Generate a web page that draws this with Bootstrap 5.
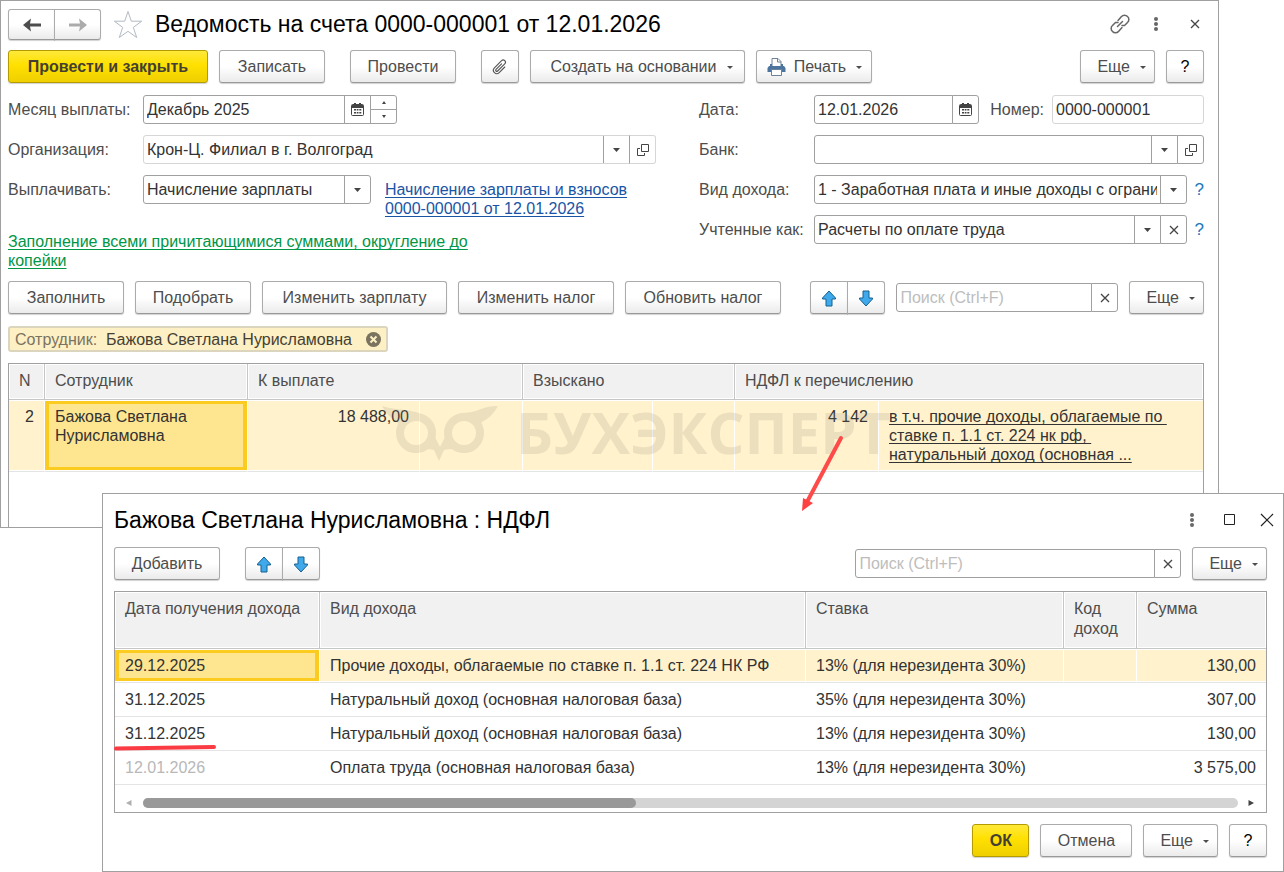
<!DOCTYPE html>
<html lang="ru">
<head>
<meta charset="utf-8">
<meta name="viewport" content="width=device-width, initial-scale=1">
<title>Ведомость на счета</title>
<link href="https://cdn.jsdelivr.net/npm/bootstrap@5.3.0/dist/css/bootstrap.min.css" rel="stylesheet">
<style>
:root { --line: #a0a0a0; --soft: #d6d6d6; --ink: #333; --label: #4d4d4d; }
body { font-family: "Liberation Sans", Arial, sans-serif; font-size: 16px; line-height: 19px; color: var(--ink); background: #fff; }
.win { border: 1px solid var(--line); background: #fff; }
.win-doc { margin-right: 65px; padding: 7px 14px 0 7px; }
.win-dlg { margin: -35px 0 0 102px; padding: 10px 16px 14px 11px; position: relative; }
.win-title { font-size: 23px; line-height: 32px; color: #000; font-weight: 400; }
.gap-cmd { gap: 11px; }
.sep-l { margin-left: 14px; }
.bar-doc { margin-top: 10px; }
.bar-cmd { margin-top: 11px; }
.bar-dlg { margin: 11px 0; }
.form-top { padding-top: 12px; }

.btn { font-size: 16px; line-height: 19px; border-radius: 3px; }
.btn-cmd { --bs-btn-color: #4d4d4d; height: 33px; padding: 0 16px; color: #4d4d4d; border: 1px solid #ababab; border-bottom-color: #999;
  background: linear-gradient(#fff 50%, #ebebeb); box-shadow: 0 1px 1px rgba(0,0,0,.18); white-space: nowrap; }
.btn-main { color: #453f33; font-weight: 700; border-color: #b39b00; background: linear-gradient(#ffe93a, #ffe000 45%, #efcf00); }
.btn-sq { width: 38px; padding: 0; color: #000; }
.btn-nav { width: 47px; height: 31px; padding: 0; }
.btn-print { padding-left: 9px; }
.btn-menu::after { content: ""; display: inline-block; border: 3px solid transparent; border-top-color: #4d4d4d; border-bottom: 0; margin: 0 -8px 3px 10px; }
.btn-bare { padding: 0; border: 0; line-height: 0; }
.b57 { min-width: 57px; } .b92 { min-width: 92px; } .b106 { min-width: 106px; } .b116 { min-width: 116px; } .b156 { min-width: 156px; }
.b185 { min-width: 185px; } .b200 { min-width: 200px; } .b215 { min-width: 215px; }

.lab { color: var(--label); white-space: nowrap; width: 135px; }
.lab-r { width: 115px; }
.top5 { padding-top: 5px; }
.top3 { padding-top: 3px; }
.form-control, .form-select { height: 29px; padding: 0 3px; font-size: 16px; line-height: 19px; color: var(--ink); border: 1px solid var(--line); border-radius: 3px; background-color: #fff; min-height: 0; }
.form-control::placeholder { color: #bdbdbd; opacity: 1; }
.form-select { padding-right: 29px; text-overflow: clip;
  background-image: url("data:image/svg+xml,%3Csvg xmlns='http://www.w3.org/2000/svg' viewBox='0 0 7 4'%3E%3Cpath d='M0 0h7L3.500 4z' fill='%23444'/%3E%3C/svg%3E"), linear-gradient(#a0a0a0, #a0a0a0);
  background-size: 7px 4px, 1px 100%; background-position: right 9px center, right 25px top; background-repeat: no-repeat; }
.soft { border-color: var(--soft); }
.input-group { min-width: 0; }
.btn-cell { width: 27px; height: 29px; padding: 0; border: 1px solid var(--line); background: #fff; line-height: 0; flex: none; }
.btn-cell.soft { border-color: var(--soft); border-left-color: var(--line); }
.spin { width: 27px; height: 29px; margin-left: -1px; border: 1px solid var(--line); border-radius: 0 3px 3px 0; }
.spin button { flex: 1; border: 0; padding: 0; background: none; line-height: 0; }
.spin button + button { border-top: 1px solid var(--line); }
.f-month { width: 254px; } .f-pay { width: 228px; } .f-date { width: 165px; } .f-num { width: 152px; } .f-find { width: 222px; } .f-find2 { width: 326px; }
.col-a { width: 648px; } .col-b { width: 505px; }
.rows { gap: 11px; }
.hint { flex: none; width: 17px; color: #1878c0; font-size: 17px; text-align: right; text-decoration: none; }
.lnk { text-decoration: underline; text-underline-offset: 2px; text-decoration-skip-ink: none; }
.lnk-blue { color: #1a55a5; } .lnk-green { color: #009646; } .lnk-dark { color: var(--ink); }
.chip { height: 26px; min-width: 380px; margin: 12px 0 11px; padding: 0 5px; border: 2px solid #dcd5bd; border-radius: 3px; background: #fdf0c4; color: #453f33; }
.chip span { color: #7a735f; }

.grid-box { border: 1px solid var(--line); }
.grid-doc { border-bottom: 0; padding-bottom: 55px; position: relative; }
.grid { width: 100%; table-layout: fixed; border-collapse: separate; border-spacing: 0; }
.grid th { font-weight: 400; color: var(--label); vertical-align: top; background: #f1f1f1; padding: 7px 9px 0 10px;
  border-right: 1px solid #c6c6c6; border-bottom: 1px solid #c6c6c6; box-shadow: inset 0 0 0 1px #fff; }
.grid td { vertical-align: top; padding: 7px 10px 0; border-bottom: 1px solid #e4e4e4; white-space: nowrap; }
.grid th:last-child { border-right: 0; }
.grid .cur td { background: #fff2cc; border-right: 1px solid #fff; box-shadow: inset 0 1px #fff, inset 0 -1px #fff; }
.grid .cur td:last-child { border-right: 0; }
.grid .cur .pick { background: #fee590; box-shadow: inset 0 1px #fff, inset 0 -1px #fff, inset 0 0 0 4px #fbcb20; }
.doc th { height: 36px; } .doc td { height: 72px; }
.dlg th { height: 57px; line-height: 20px; } .dlg td { height: 34px; }
.w36 { width: 36px; } .w203 { width: 203px; } .w172 { width: 172px; } .w103 { width: 103px; } .w130 { width: 130px; } .w82 { width: 82px; } .w144 { width: 144px; }
.w205 { width: 205px; } .w486 { width: 486px; } .w258 { width: 258px; } .w73 { width: 73px; }
.dim { color: #b8b8b8; }
.wmark { position: absolute; left: 367px; top: 37px; height: 66px; pointer-events: none; color: #8e8175; opacity: .16; }
.wmark svg { flex: none; }
.wmark b { font: 700 58px/62px "Open Sans", sans-serif; margin-left: 16px; white-space: nowrap; }
.arrow { position: absolute; left: 60px; top: 33px; z-index: 5; }
.stroke { position: absolute; left: -2px; bottom: -1px; }
.scroll { height: 27px; padding: 8px 12px 0 11px; }
.scroll-track { height: 10px; border-radius: 5px; background: #d4d4d4; margin: 0 10px 0 11px; }
.scroll-thumb { height: 10px; border-radius: 5px; background: #999; }
.close-dlg { margin-right: -7px; }
.dots-dlg { margin-right: 6px; }
</style>
</head>
<body>
<svg class="d-none" xmlns="http://www.w3.org/2000/svg">
  <symbol id="i-cal" viewBox="0 0 13 13"><path d="M1 2h11v3H1z" fill="#444"/><path d="M3 0h2v3H3zM8 0h2v3H8z" fill="#444"/><rect x=".5" y="1.500" width="12" height="11" rx="1" fill="none" stroke="#444"/><path d="M3 6h2v1.500H3zM5.700 6h1.800v1.500H5.700zM8.300 6h2v1.500h-2zM3 9h2v1.500H3zM5.700 9h1.800v1.500H5.700zM8.300 9h2v1.500h-2z" fill="#444"/></symbol>
  <symbol id="i-open" viewBox="0 0 12 12"><path d="M4.500.5h7v7h-7zM3 4.500H.5v7h7V9" fill="none" stroke="#444"/></symbol>
  <symbol id="i-x" viewBox="0 0 10 10"><path d="M1 1l8 8M9 1l-8 8" stroke="#444" stroke-width="1.300" fill="none"/></symbol>
  <symbol id="i-dots" viewBox="0 0 4 14"><g fill="#666"><circle cx="2" cy="2" r="2"/><circle cx="2" cy="7" r="2"/><circle cx="2" cy="12" r="2"/></g></symbol>
  <symbol id="i-up" viewBox="0 0 16 17"><path d="M8 1l6.500 7v1H11v7H5V9H1.500V8z" fill="#3fa9ec" stroke="#15608f" stroke-linejoin="round"/></symbol>
  <symbol id="i-down" viewBox="0 0 16 17"><path d="M8 16l6.500-7V8H11V1H5v7H1.500v1z" fill="#3fa9ec" stroke="#15608f" stroke-linejoin="round"/></symbol>
</svg>

<main class="win win-doc">
  <header class="d-flex align-items-center">
    <div class="btn-group">
      <button class="btn btn-cmd btn-nav" type="button" aria-label="Назад"><svg width="18" height="14" viewBox="0 0 18 14"><path d="M0 7l8-6.500L7 5.500h11v3H7l1 5z" fill="#4d4d4d"/></svg></button>
      <button class="btn btn-cmd btn-nav" type="button" aria-label="Вперед"><svg width="18" height="14" viewBox="0 0 18 14"><path d="M18 7l-8-6.500 1 5H0v3h11l-1 5z" fill="#ababab"/></svg></button>
    </div>
    <button class="btn btn-bare ms-2 ps-1 me-2" type="button" aria-label="В избранное"><svg width="30" height="29" viewBox="0 0 30 29"><path d="M15 1.500l3.300 9.700h10.400l-8.400 6.200 3.400 10.100L15 21.300l-8.700 6.200 3.400-10.100-8.400-6.200h10.400z" fill="#fff" stroke="#b3bac1"/></svg></button>
    <h1 class="win-title m-0 ms-1">Ведомость на счета 0000-000001 от 12.01.2026</h1>
    <div class="d-flex align-items-center ms-auto gap-4 me-1">
      <button class="btn btn-bare" type="button" aria-label="Ссылка"><svg width="20" height="20" viewBox="0 0 20 20" fill="none" stroke="#666" stroke-width="1.500" stroke-linecap="round"><path d="M8 6.500l3.500-4a4 4 0 0 1 6 0 4 4 0 0 1 0 6l-3 3H12M12 13.500l-3.500 4a4 4 0 0 1-6 0 4 4 0 0 1 0-6l3-3H8M7.500 12.500l5-5"/></svg></button>
      <button class="btn btn-bare" type="button" aria-label="Меню"><svg width="4" height="14"><use href="#i-dots"/></svg></button>
      <button class="btn btn-bare ms-2" type="button" aria-label="Закрыть"><svg width="10" height="10"><use href="#i-x"/></svg></button>
    </div>
  </header>

  <div class="d-flex gap-cmd bar-doc">
    <button class="btn btn-cmd btn-main b200" type="button">Провести и закрыть</button>
    <button class="btn btn-cmd b106" type="button">Записать</button>
    <button class="btn btn-cmd sep-l b106" type="button">Провести</button>
    <button class="btn btn-cmd btn-sq sep-l" type="button" aria-label="Файлы"><svg width="18" height="18" viewBox="0 0 16 16"><path transform="rotate(45 8 8)" fill="#555" d="M4.500 3a2.500 2.500 0 0 1 5 0v9a1.500 1.500 0 0 1-3 0V5a.5.5 0 0 1 1 0v7a.5.5 0 0 0 1 0V3a1.500 1.500 0 1 0-3 0v9a2.500 2.500 0 0 0 5 0V5a.5.5 0 0 1 1 0v7a3.500 3.500 0 1 1-7 0z"/></svg></button>
    <button class="btn btn-cmd btn-menu b215" type="button">Создать на основании</button>
    <button class="btn btn-cmd btn-menu btn-print b116" type="button"><svg class="me-2" width="19" height="18" viewBox="0 0 19 18"><path d="M5 8V.5h6L14 3.500V8" fill="#fff" stroke="#6d8297"/><path d="M10.500.5v3.500H14" fill="none" stroke="#6d8297"/><path d="M3 6h2v2h9V6h2v2h1l1.500 2v4h-18v-4L2 8h1z" fill="#4b759f"/><path d="M4.500 11.500h10v6h-10z" fill="#fff" stroke="#6d8297"/></svg>Печать</button>
    <button class="btn btn-cmd btn-menu ms-auto" type="button">Еще</button>
    <button class="btn btn-cmd btn-sq" type="button">?</button>
  </div>

  <form class="d-flex justify-content-between form-top">
    <div class="col-a d-flex flex-column rows">
      <div class="d-flex align-items-center">
        <label class="lab" for="month">Месяц выплаты:</label>
        <div class="input-group f-month flex-nowrap">
          <input class="form-control" id="month" value="Декабрь 2025">
          <button class="btn btn-cell" type="button" aria-label="Календарь"><svg width="13" height="13"><use href="#i-cal"/></svg></button>
          <div class="spin d-flex flex-column">
            <button type="button" aria-label="Больше"><svg width="4" height="3"><path d="M0 3h4L2 0z" fill="#444"/></svg></button>
            <button type="button" aria-label="Меньше"><svg width="4" height="3"><path d="M0 0h4L2 3z" fill="#444"/></svg></button>
          </div>
        </div>
      </div>
      <div class="d-flex align-items-center">
        <label class="lab" for="org">Организация:</label>
        <div class="input-group flex-nowrap flex-fill w-auto">
          <select class="form-select soft" id="org"><option>Крон-Ц. Филиал в г. Волгоград</option></select>
          <button class="btn btn-cell soft" type="button" aria-label="Открыть"><svg width="12" height="12"><use href="#i-open"/></svg></button>
        </div>
      </div>
      <div class="d-flex align-items-start">
        <label class="lab top5" for="pay">Выплачивать:</label>
        <select class="form-select f-pay" id="pay"><option>Начисление зарплаты</option></select>
        <a class="lnk lnk-blue sep-l top5" href="#">Начисление зарплаты и взносов<br>0000-000001 от 12.01.2026</a>
      </div>
      <div class="top3"><a class="lnk lnk-green" href="#">Заполнение всеми причитающимися суммами, округление до<br>копейки</a></div>
    </div>
    <div class="col-b d-flex flex-column rows">
      <div class="d-flex align-items-center">
        <label class="lab lab-r" for="date">Дата:</label>
        <div class="input-group f-date flex-nowrap">
          <input class="form-control" id="date" value="12.01.2026">
          <button class="btn btn-cell" type="button" aria-label="Календарь"><svg width="13" height="13"><use href="#i-cal"/></svg></button>
        </div>
        <label class="ms-auto me-2 lab w-auto" for="num">Номер:</label>
        <input class="form-control soft f-num" id="num" value="0000-000001">
      </div>
      <div class="d-flex align-items-center">
        <label class="lab lab-r" for="bank">Банк:</label>
        <div class="input-group flex-nowrap flex-fill w-auto">
          <select class="form-select" id="bank"><option></option></select>
          <button class="btn btn-cell" type="button" aria-label="Открыть"><svg width="12" height="12"><use href="#i-open"/></svg></button>
        </div>
      </div>
      <div class="d-flex align-items-center">
        <label class="lab lab-r flex-shrink-0" for="kind">Вид дохода:</label>
        <div class="input-group flex-nowrap flex-fill w-auto">
          <select class="form-select" id="kind"><option>1 - Заработная плата и иные доходы с ограничением взыскания</option></select>
        </div>
        <a class="hint" href="#">?</a>
      </div>
      <div class="d-flex align-items-center">
        <label class="lab lab-r" for="acc">Учтенные как:</label>
        <div class="input-group flex-nowrap flex-fill w-auto">
          <select class="form-select" id="acc"><option>Расчеты по оплате труда</option></select>
          <button class="btn btn-cell" type="button" aria-label="Очистить"><svg width="10" height="10"><use href="#i-x"/></svg></button>
        </div>
        <a class="hint" href="#">?</a>
      </div>
    </div>
  </form>

  <div class="d-flex align-items-center gap-cmd bar-cmd">
    <button class="btn btn-cmd b116" type="button">Заполнить</button>
    <button class="btn btn-cmd b116" type="button">Подобрать</button>
    <button class="btn btn-cmd b185" type="button">Изменить зарплату</button>
    <button class="btn btn-cmd b156" type="button">Изменить налог</button>
    <button class="btn btn-cmd b156" type="button">Обновить налог</button>
    <div class="btn-group ms-auto">
      <button class="btn btn-cmd btn-sq" type="button" aria-label="Вверх"><svg width="16" height="17"><use href="#i-up"/></svg></button>
      <button class="btn btn-cmd btn-sq" type="button" aria-label="Вниз"><svg width="16" height="17"><use href="#i-down"/></svg></button>
    </div>
    <div class="input-group f-find flex-nowrap">
      <input class="form-control" placeholder="Поиск (Ctrl+F)" aria-label="Поиск">
      <button class="btn btn-cell" type="button" aria-label="Очистить"><svg width="10" height="10"><use href="#i-x"/></svg></button>
    </div>
    <button class="btn btn-cmd btn-menu" type="button">Еще</button>
  </div>

  <div class="chip d-inline-flex align-items-center justify-content-between"><div><span>Сотрудник:</span>&nbsp; Бажова Светлана Нурисламовна</div>
    <button class="btn btn-bare" type="button" aria-label="Снять отбор"><svg width="15" height="15" viewBox="0 0 15 15"><circle cx="7.500" cy="7.500" r="7.500" fill="#7a735f"/><path d="M4.500 4.500l6 6M10.500 4.500l-6 6" stroke="#fdf0c4" stroke-width="2"/></svg></button>
  </div>

  <div class="grid-box grid-doc">
    <table class="grid doc">
      <colgroup><col class="w36"><col class="w203"><col class="w172"><col class="w103"><col class="w130"><col class="w82"><col class="w144"><col></colgroup>
      <thead><tr><th>N</th><th>Сотрудник</th><th colspan="2">К выплате</th><th colspan="2">Взыскано</th><th colspan="2">НДФЛ к перечислению</th></tr></thead>
      <tbody><tr class="cur">
        <td class="text-end">2</td>
        <td class="pick">Бажова Светлана<br>Нурисламовна</td>
        <td class="text-end">18 488,00</td><td></td><td></td><td></td>
        <td class="text-end position-relative">4 142<svg class="arrow" width="50" height="80" viewBox="0 0 50 80"><path d="M46 5L12 69" stroke="#ff4a4a" stroke-width="4" stroke-linecap="round"/><path d="M7 78l1-13 10 5z" fill="#ff4040"/></svg></td>
        <td><a class="lnk lnk-dark" href="#">в т.ч. прочие доходы, облагаемые по&nbsp;<br>ставке п. 1.1 ст. 224 нк рф,&nbsp;<br>натуральный доход (основная ...</a></td>
      </tr></tbody>
    </table>
    <div class="wmark d-flex" aria-hidden="true">
      <svg width="124" height="66" viewBox="0 0 124 66" fill="currentColor"><g fill="none" stroke="currentColor" stroke-width="8"><circle cx="40" cy="32" r="16"/><circle cx="88" cy="32" r="16"/></g><path d="M6 5Q12 7 20 8Q34 9 43 12L42 16Q30 17 25 25L22 22Q12 16 6 5ZM122 5Q112 5 105 8Q96 12 85 12L86 16Q98 17 103 25L106 21Q116 16 122 5ZM59 36L64 46L69 36L74 45L78 48Q72 48 68 49L63 60L58 49Q54 48 50 48L54 45Z"/></svg>
      <b>БУХЭКСПЕРТ</b>
    </div>
  </div>
</main>

<section class="win win-dlg">
  <header class="d-flex align-items-center">
    <h2 class="win-title m-0">Бажова Светлана Нурисламовна : НДФЛ</h2>
    <div class="d-flex align-items-center ms-auto gap-4">
      <button class="btn btn-bare dots-dlg" type="button" aria-label="Меню"><svg width="4" height="14"><use href="#i-dots"/></svg></button>
      <button class="btn btn-bare" type="button" aria-label="Развернуть"><svg width="12" height="12"><path d="M.5.5h10v10H.5z" fill="none" stroke="#222"/></svg></button>
      <button class="btn btn-bare close-dlg" type="button" aria-label="Закрыть"><svg width="14" height="14" viewBox="0 0 14 14"><path d="M1 1l12 12M13 1L1 13" stroke="#222" stroke-width="1.200"/></svg></button>
    </div>
  </header>
  <div class="d-flex align-items-center gap-cmd bar-dlg">
    <button class="btn btn-cmd b106" type="button">Добавить</button>
    <div class="btn-group sep-l">
      <button class="btn btn-cmd btn-sq" type="button" aria-label="Вверх"><svg width="16" height="17"><use href="#i-up"/></svg></button>
      <button class="btn btn-cmd btn-sq" type="button" aria-label="Вниз"><svg width="16" height="17"><use href="#i-down"/></svg></button>
    </div>
    <div class="input-group f-find2 flex-nowrap ms-auto">
      <input class="form-control" placeholder="Поиск (Ctrl+F)" aria-label="Поиск">
      <button class="btn btn-cell" type="button" aria-label="Очистить"><svg width="10" height="10"><use href="#i-x"/></svg></button>
    </div>
    <button class="btn btn-cmd btn-menu" type="button">Еще</button>
  </div>
  <div class="grid-box">
    <table class="grid dlg">
      <colgroup><col class="w205"><col class="w486"><col class="w258"><col class="w73"><col></colgroup>
      <thead><tr><th class="text-nowrap">Дата получения дохода</th><th>Вид дохода</th><th>Ставка</th><th>Код доход</th><th>Сумма</th></tr></thead>
      <tbody>
        <tr class="cur"><td class="pick">29.12.2025</td><td>Прочие доходы, облагаемые по ставке п. 1.1 ст. 224 НК РФ</td><td>13% (для нерезидента 30%)</td><td></td><td class="text-end">130,00</td></tr>
        <tr><td>31.12.2025</td><td>Натуральный доход (основная налоговая база)</td><td>35% (для нерезидента 30%)</td><td></td><td class="text-end">307,00</td></tr>
        <tr><td class="position-relative">31.12.2025<svg class="stroke" width="104" height="7" viewBox="0 0 104 7"><path d="M3 4.500L101 3" stroke="#fb3b43" stroke-width="4" stroke-linecap="round"/></svg></td><td>Натуральный доход (основная налоговая база)</td><td>13% (для нерезидента 30%)</td><td></td><td class="text-end">130,00</td></tr>
        <tr><td class="dim">12.01.2026</td><td>Оплата труда (основная налоговая база)</td><td>13% (для нерезидента 30%)</td><td></td><td class="text-end">3 575,00</td></tr>
      </tbody>
    </table>
    <div class="scroll d-flex align-items-center">
      <svg width="6" height="6"><path d="M5.500 0v6L0 3z" fill="#b0b0b0"/></svg>
      <div class="scroll-track flex-fill"><div class="scroll-thumb" style="width:45%"></div></div>
      <svg width="6" height="6"><path d="M.5 0v6L6 3z" fill="#444"/></svg>
    </div>
  </div>
  <footer class="d-flex justify-content-end gap-cmd bar-cmd">
    <button class="btn btn-cmd btn-main b57" type="button">ОК</button>
    <button class="btn btn-cmd b92" type="button">Отмена</button>
    <button class="btn btn-cmd btn-menu" type="button">Еще</button>
    <button class="btn btn-cmd btn-sq" type="button">?</button>
  </footer>
</section>
<script src="https://cdn.jsdelivr.net/npm/bootstrap@5.3.0/dist/js/bootstrap.bundle.min.js"></script>
</body>
</html>
